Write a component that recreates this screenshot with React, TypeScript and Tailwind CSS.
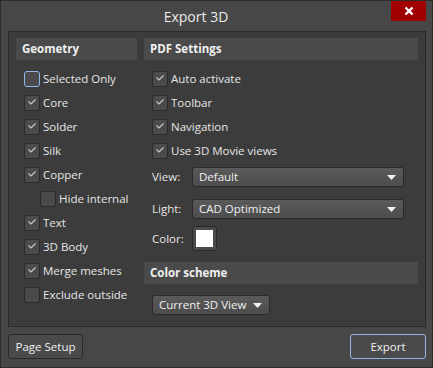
import { ReactNode } from "react";

const Check = () => (
  <svg width="10" height="8" viewBox="0 0 10 8" className="mb-[3px]">
    <polyline points="1.5,3.5 4,6 8.5,1.5" fill="none" stroke="#c9c9c9" strokeWidth="1.1" />
  </svg>
);

const CheckRow = ({ label, checked = true, focus = false, indent = false }: { label: string; checked?: boolean; focus?: boolean; indent?: boolean }) => (
  <div className={`flex h-6 items-center ${indent ? "pl-6" : "pl-2"}`}>
    <div
      className={`flex h-4 w-4 items-center justify-center rounded-[3px] border bg-[#4b4b4b] ${
        focus ? "border-[#8fb8e8]" : "border-[#2a2a2a]"
      }`}
    >
      {checked && <Check />}
    </div>
    <span className="ml-[3px] text-[#e6e6e6]">{label}</span>
  </div>
);

const Header = ({ children }: { children: ReactNode }) => (
  <div className="flex h-[22px] items-center bg-[#4a4a4a] pl-[6px] font-bold text-[#f0f0f0]">{children}</div>
);

const Arrow = () => (
  <svg width="9" height="5" viewBox="0 0 9 5">
    <polygon points="0,0 9,0 4.5,5" fill="#f2f2f2" />
  </svg>
);

const Select = ({ value, className }: { value: string; className: string }) => (
  <div
    className={`flex h-5 items-center justify-between rounded-[3px] border border-[#2a2a2a] bg-gradient-to-b from-[#5a5a5a] to-[#4c4c4c] pl-[6px] pr-[7px] text-[#f0f0f0] ${className}`}
  >
    <span>{value}</span>
    <Arrow />
  </div>
);

export default function App() {
  return (
    <div
      className="flex h-[368px] w-[433px] flex-col border border-[#2b2b2b] bg-[#474747] text-[11.5px]"
      style={{ fontFamily: '"Open Sans", "Noto Sans", sans-serif' }}
    >
      <div className="flex h-[30px]">
        <div className="flex flex-1 items-center justify-center text-[14px] text-[#ececec]">Export 3D</div>
        <div className="mr-[6px] flex h-5 w-[35px] items-center justify-center bg-[#a00000]">
          <svg width="10" height="10" viewBox="0 0 10 10">
            <path d="M1.5 1.5 L8.5 8.5 M8.5 1.5 L1.5 8.5" stroke="#fff" strokeWidth="2.4" />
          </svg>
        </div>
      </div>

      <div className="ml-[7px] mr-[6px] flex h-[296px] gap-[7px] border border-[#2a2a2a] bg-[#3c3c3c] pl-[7px] pr-[7px] pt-[6px]">
        <div className="w-[121px]">
          <Header>Geometry</Header>
          <div className="mt-[7px]">
            <CheckRow label="Selected Only" checked={false} focus />
            <CheckRow label="Core" />
            <CheckRow label="Solder" />
            <CheckRow label="Silk" />
            <CheckRow label="Copper" />
            <CheckRow label="Hide internal" checked={false} indent />
            <CheckRow label="Text" />
            <CheckRow label="3D Body" />
            <CheckRow label="Merge meshes" />
            <CheckRow label="Exclude outside" checked={false} />
          </div>
        </div>

        <div className="flex-1">
          <Header>PDF Settings</Header>
          <div className="mt-[7px]">
            <CheckRow label="Auto activate" />
            <CheckRow label="Toolbar" />
            <CheckRow label="Navigation" />
            <CheckRow label="Use 3D Movie views" />
          </div>
          <div className="mt-[4px] flex items-center pl-2">
            <span className="w-10 text-[#e6e6e6]">View:</span>
            <Select value="Default" className="w-[212px]" />
          </div>
          <div className="mt-3 flex items-center pl-2">
            <span className="w-10 text-[#e6e6e6]">Light:</span>
            <Select value="CAD Optimized" className="w-[212px]" />
          </div>
          <div className="mt-[7px] flex items-center pl-2">
            <span className="w-10 text-[#e6e6e6]">Color:</span>
            <div className="flex h-[25px] w-[25px] items-center justify-center rounded-[3px] border border-[#2a2a2a] bg-[#4a4a4a]">
              <div className="h-[17px] w-[17px] bg-white" />
            </div>
          </div>
          <div className="mt-[11px]">
            <Header>Color scheme</Header>
          </div>
          <div className="mt-[11px] pl-2">
            <Select value="Current 3D View" className="w-[118px]" />
          </div>
        </div>
      </div>

      <div className="ml-[7px] mr-[6px] mt-[7px] flex justify-between">
        <div className="flex h-[25px] w-[75px] items-center justify-center rounded-[3px] border border-[#2a2a2a] bg-[#4a4a4a] text-[#f0f0f0]">
          Page Setup
        </div>
        <div className="flex h-[25px] w-[76px] items-center justify-center rounded-[3px] border border-[#8fb8e8] bg-[#4a4a4a] text-[#f0f0f0]">
          Export
        </div>
      </div>
    </div>
  );
}
